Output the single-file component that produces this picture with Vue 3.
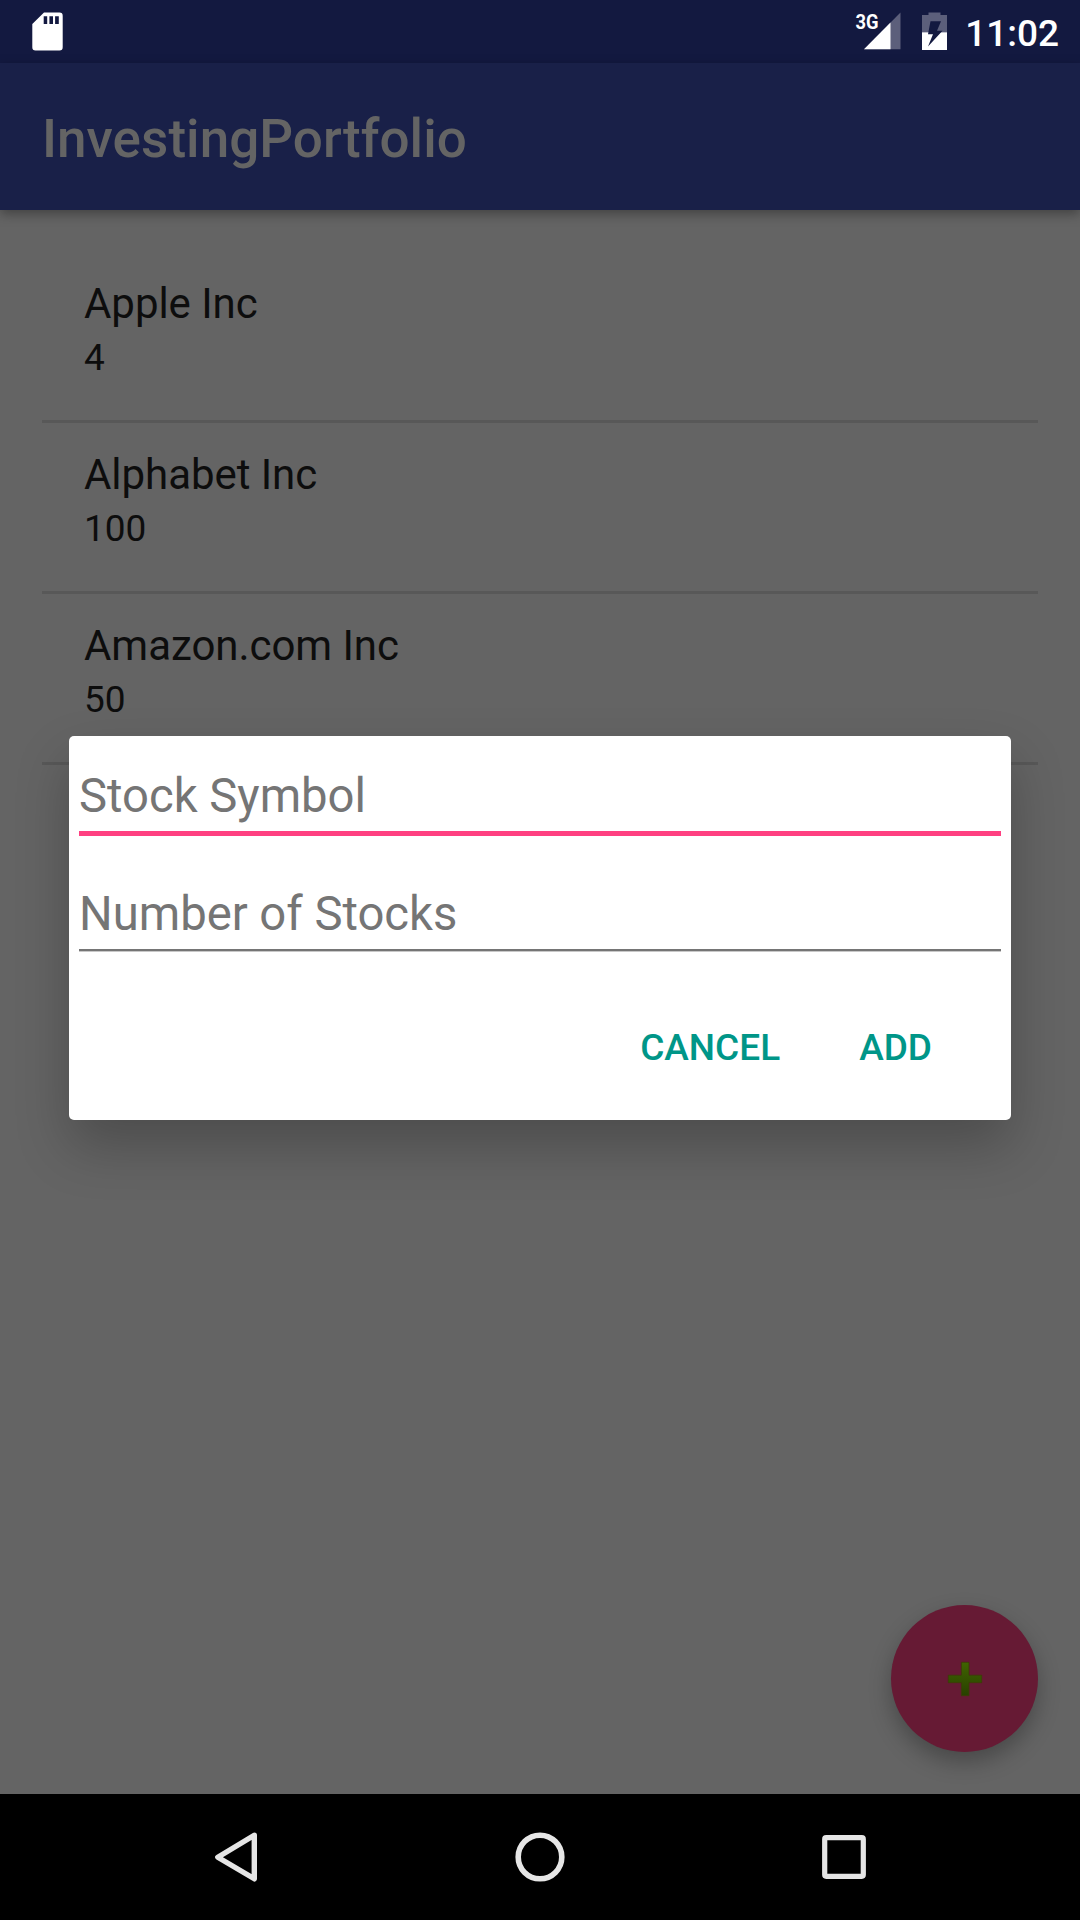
<script setup>
const stocks = [
  { name: 'Apple Inc', count: 4 },
  { name: 'Alphabet Inc', count: 100 },
  { name: 'Amazon.com Inc', count: 50 },
]
</script>

<template>
  <div class="screen">
    <header class="status">
      <svg class="sd" width="32" height="40" viewBox="0 0 32 40">
        <path fill="#fff" fill-rule="evenodd" d="M12 .5H27.500Q30.700 .5 30.700 3.700V35.300Q30.700 38.500 27.500 38.500H3.500Q.3 38.500 .3 35.300V12ZM11.700 4.300V12H15.200V4.300ZM17.400 4.300V12H21V4.300ZM23.100 4.300V12H26.800V4.300Z" />
      </svg>
      <svg class="indicators" width="100" height="63" viewBox="850 0 100 63">
        <path d="M900.500 12.500V49.300H864Z" fill="#5c5f7b" />
        <path d="M890.500 22.600V49.300H864Z" fill="#fff" />
        <text x="855.500" y="28.800" textLength="23" lengthAdjust="spacingAndGlyphs" class="net">3G</text>
        <path fill="#5c5f7b" d="M928.500 12.500H940.500V15H947V32.500H922V15H928.500Z" />
        <path fill="#fff" d="M922 32.300H947V50H922Z" />
        <path fill="#131940" d="M930.500 21.300H941L937 30.800H942.500L928 46.500L933 34.300H928Z" />
      </svg>
      <span class="clock">11:02</span>
    </header>

    <div class="appbar"><h1>InvestingPortfolio</h1></div>

    <main class="content">
      <ul class="list">
        <li v-for="s in stocks" :key="s.name" class="row">
          <div class="name">{{ s.name }}</div>
          <div class="count">{{ s.count }}</div>
        </li>
      </ul>
      <button class="fab" aria-label="Add">
        <svg width="36" height="36" viewBox="0 0 36 36">
          <defs>
            <linearGradient id="plus" x1="0" y1="0" x2="0" y2="1">
              <stop offset="0" stop-color="#406400" />
              <stop offset="1" stop-color="#284000" />
            </linearGradient>
          </defs>
          <path fill="url(#plus)" stroke="#3c3c08" stroke-width=".8" stroke-linejoin="round" d="M14.400 1.300H22V14.200H34.700V21.700H22V34.700H14.400V21.700H1.300V14.200H14.400Z" />
        </svg>
      </button>
    </main>

    <nav class="nav">
      <svg width="1080" height="126" viewBox="0 0 1080 126" fill="none" stroke="#e6e6e6">
        <path d="M254.300 41.200L217.800 63.200L254.300 84.800Z" stroke-width="5.400" stroke-linejoin="round" />
        <circle cx="540" cy="63" r="21.800" stroke-width="5.600" />
        <rect x="824.700" y="43.700" width="38.600" height="38.600" rx="1.500" stroke-width="5.200" />
      </svg>
    </nav>

    <section class="dialog">
      <div class="field focused">Stock Symbol</div>
      <div class="field">Number of Stocks</div>
      <div class="actions">
        <button>CANCEL</button>
        <button>ADD</button>
      </div>
    </section>
  </div>
</template>

<style>
body { margin: 0; }
</style>

<style scoped>
.screen {
  position: relative;
  width: 1080px;
  height: 1920px;
  display: flex;
  flex-direction: column;
  overflow: hidden;
  background: #646464;
  font-family: Roboto, sans-serif;
}
.status {
  height: 63px;
  background: #131940;
  display: flex;
  align-items: flex-start;
  color: #fff;
}
.sd { margin: 12px 0 0 32px; }
.indicators { margin-left: auto; }
.net { font: 700 21px Roboto, sans-serif; fill: #fff; }
.clock {
  width: 109px;
  margin-right: 21px;
  font-size: 37px;
  font-weight: 500;
  line-height: 67px;
  text-align: right;
}
.appbar {
  height: 147px;
  box-sizing: border-box;
  padding: 5px 42px 0;
  background: #192048;
  box-shadow: 0 4px 11px rgba(0, 0, 0, .34);
}
h1 {
  margin: 0;
  font-size: 53px;
  font-weight: 500;
  line-height: 142px;
  letter-spacing: .05px;
  color: #646464;
}
.content {
  flex: 1;
  display: flex;
  flex-direction: column;
  justify-content: space-between;
  padding: 42px;
}
.list { margin: 0; padding: 0; list-style: none; color: #0d0d0d; }
.row {
  height: 171px;
  box-sizing: border-box;
  padding: 26px 42px 0;
  border-bottom: 3px solid #585858;
}
.name { font-size: 42px; line-height: 51px; letter-spacing: -.05px; }
.count { font-size: 37px; line-height: 57px; }
.fab {
  align-self: flex-end;
  width: 147px;
  height: 147px;
  padding: 0;
  border: 0;
  border-radius: 50%;
  background: #661a34;
  display: flex;
  align-items: center;
  justify-content: center;
  box-shadow: 0 10px 22px rgba(0, 0, 0, .28);
}
.nav { height: 126px; background: #000; }
.nav svg { display: block; }
.dialog {
  position: absolute;
  left: 69px;
  top: 736px;
  width: 942px;
  height: 384px;
  box-sizing: border-box;
  padding: 23px 10px 0;
  border-radius: 5px;
  background: #fff;
  box-shadow: 0 26px 54px rgba(0, 0, 0, .24);
}
.field {
  height: 93px;
  box-sizing: border-box;
  padding-top: 19px;
  font-size: 47.25px;
  line-height: 74px;
  letter-spacing: -.02px;
  color: #757575;
  border-bottom: 2px solid #757575;
  box-shadow: 0 1px #c8c8c8;
}
.field.focused {
  height: 77px;
  padding-top: 0;
  margin-bottom: 22px;
  border-bottom: 5px solid #ff4081;
  box-shadow: none;
}
.actions { display: flex; justify-content: flex-end; gap: 79px; padding: 66px 69px 0 0; }
.actions button {
  padding: 0;
  border: 0;
  background: none;
  color: #009688;
  font: 500 37px/61px Roboto, sans-serif;
}
</style>
